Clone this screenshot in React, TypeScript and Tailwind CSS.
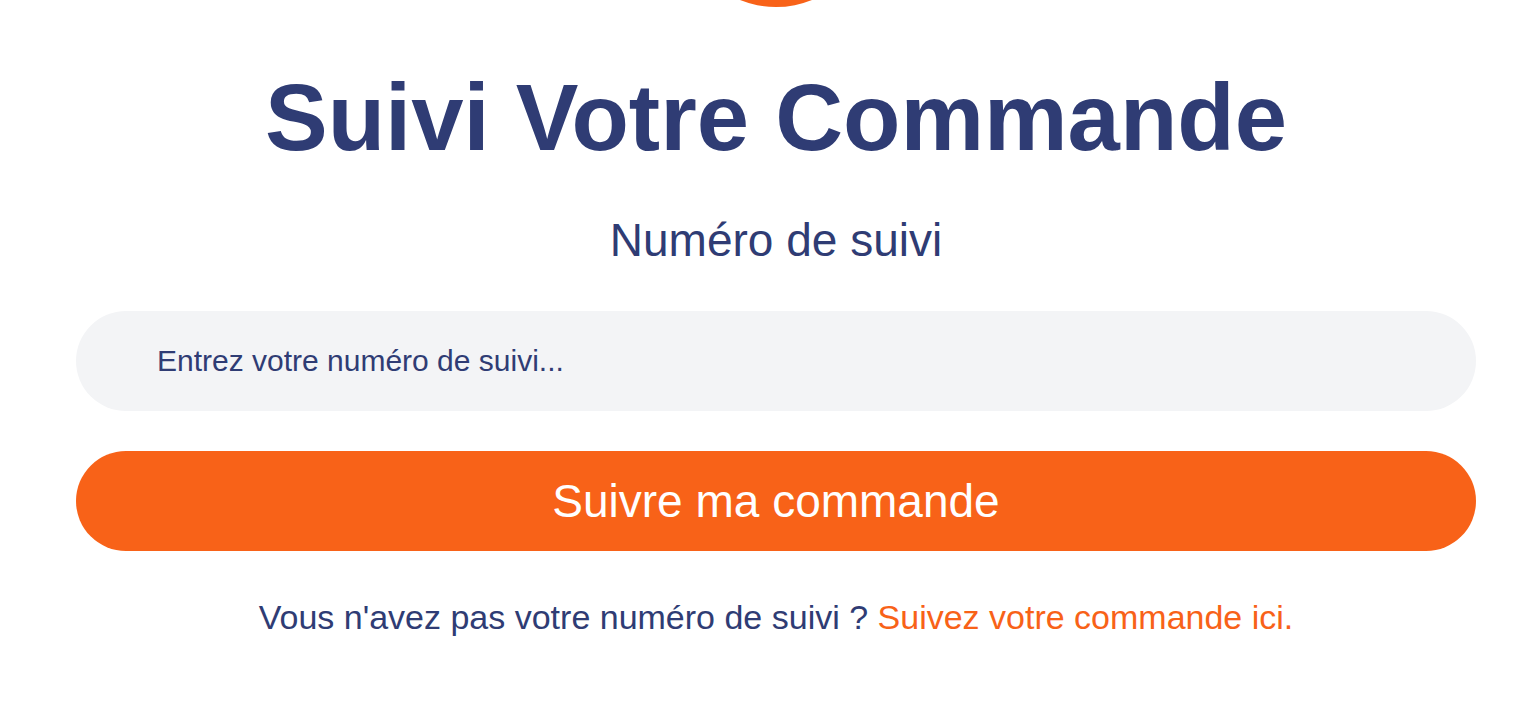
export default function App() {
  return (
    <div className="relative min-h-[702px] w-full overflow-hidden bg-white font-['Liberation_Sans',Arial,sans-serif] text-[#2f3c74]">
      {/* logo circle peeking from the top */}
      <div className="absolute left-[680px] top-[-185px] h-[192px] w-[192px] rounded-full bg-[#f86218]" />

      <div className="ml-[76px] flex w-[1400px] flex-col items-center pt-[58px]">
        <h1 className="text-[94px] font-bold leading-[120px]">Suivi Votre Commande</h1>

        <label htmlFor="tracking" className="mt-[32px] text-[46px] leading-[60px]">
          Numéro de suivi
        </label>

        <input
          id="tracking"
          type="text"
          placeholder="Entrez votre numéro de suivi..."
          className="mt-[41px] h-[100px] w-full rounded-full bg-[#f3f4f6] px-[81px] text-[30px] text-[#2f3c74] placeholder:text-[#2f3c74] outline-none"
        />

        <button
          type="button"
          className="mt-[40px] h-[100px] w-full rounded-full bg-[#f86218] text-[46px] text-white"
        >
          Suivre ma commande
        </button>

        <p className="mt-[42px] text-[34px] leading-[48px]">
          Vous n'avez pas votre numéro de suivi ?{" "}
          <a href="#" className="text-[#f86218]">
            Suivez votre commande ici.
          </a>
        </p>
      </div>
    </div>
  );
}
